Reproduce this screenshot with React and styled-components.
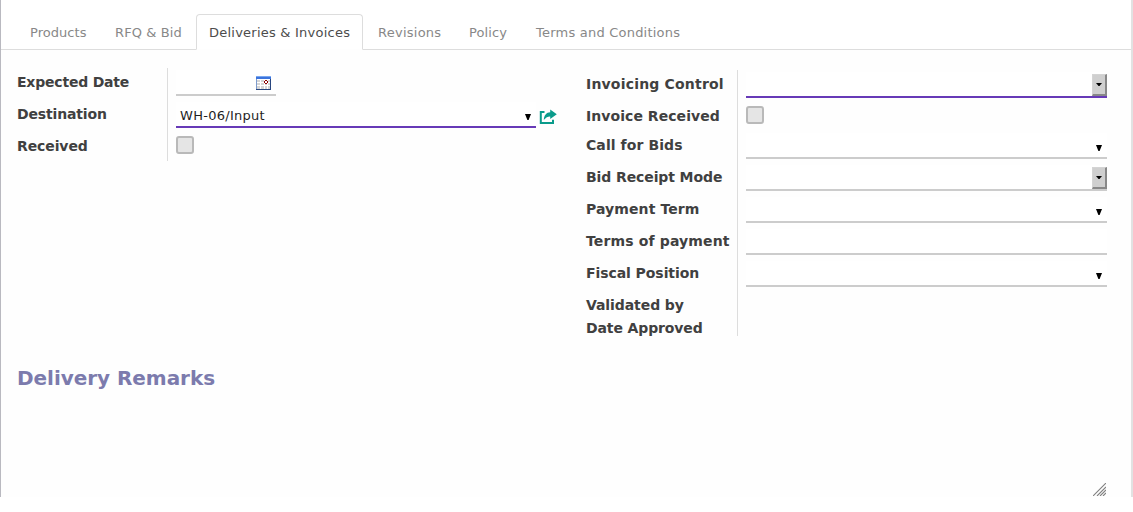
import React from 'react';
import styled, { createGlobalStyle } from 'styled-components';

const GlobalStyle = createGlobalStyle`
  * { box-sizing: border-box; }
  body {
    margin: 0;
    background: #fff;
    font-family: Verdana, "DejaVu Sans", sans-serif;
    font-size: 13px;
    color: #404040;
  }
`;

const Sheet = styled.main`
  display: flex;
  flex-direction: column;
  height: 497px;
  width: 1133px;
  background: #fefefe;
  border-left: 1px solid #b9b9c0;
  border-right: 2px solid #e2e2e2;
`;

const TabBar = styled.nav`
  display: flex;
  align-items: flex-end;
  height: 50px;
  padding-left: 16px;
  background: #fff;
  border-bottom: 1px solid #ddd;
`;

const Tab = styled.a`
  width: ${p => p.$width}px;
  height: 36px;
  margin-right: 2px;
  margin-bottom: -1px;
  padding: ${p => (p.$active ? '0 12px' : '0 13px')};
  line-height: ${p => (p.$active ? 35 : 37)}px;
  white-space: nowrap;
  letter-spacing: ${p => p.$spacing}px;
  color: ${p => (p.$active ? '#4c4c4c' : '#888')};
  ${p => p.$active && `
    background: #fff;
    border: 1px solid #ddd;
    border-bottom-color: #fefefe;
    border-radius: 4px 4px 0 0;
  `}
`;

const Columns = styled.div`
  display: flex;
  align-items: flex-start;
  padding: 18px 24px 0 16px;
  height: 316px;
`;

const Group = styled.section`
  width: ${p => p.$width}px;
  margin-top: ${p => p.$offset || 0}px;
  display: grid;
  grid-template-columns: ${p => p.$labels}px 1fr;
`;

const Labels = styled.div`
  padding-top: 2px;
  border-right: 1px solid #ddd;
`;

const Fields = styled.div`
  padding: 2px 0 0 8px;
`;

const Label = styled.div`
  height: ${p => p.$height}px;
  line-height: 24px;
  font-size: 14px;
  font-weight: bold;
  letter-spacing: ${p => p.$spacing}px;
  white-space: nowrap;
`;

const FieldRow = styled.div`
  display: flex;
  align-items: flex-start;
  height: ${p => p.$height}px;
`;

const Field = styled.div`
  display: flex;
  align-items: center;
  justify-content: space-between;
  width: ${p => p.$width}px;
  height: 26px;
  padding: 0 ${p => (p.$flush ? 0 : 5)}px 0 4px;
  background: #fff;
  border-bottom: 2px solid ${p => (p.$required ? '#673ab7' : '#ccc')};
`;

const Value = styled.span`
  padding-top: 3px;
  color: #1f1f1f;
  letter-spacing: ${p => p.$spacing || 0}px;
`;

const Checkbox = styled.span`
  width: 18px;
  height: 18px;
  margin-top: 2px;
  background: #e5e5e5;
  border: 2px solid #b9b9b9;
  border-radius: 3px;
`;

const Caret = styled.svg`
  width: 6px;
  height: 6px;
  margin-top: 5px;
`;

const SelectButton = styled.span`
  display: flex;
  align-items: center;
  justify-content: center;
  align-self: flex-end;
  width: 15px;
  height: 22px;
  background: #cfcfcf;
  border: solid;
  border-width: 1px 2px 2px 1px;
  border-color: #d4d4d4 #888 #888 #d4d4d4;
`;

const CalendarIcon = styled.svg`
  width: 15px;
  height: 14px;
  margin-top: 2px;
`;

const LinkIcon = styled.svg`
  width: 18px;
  height: 16px;
  margin: 7px 0 0 3px;
`;

const Heading = styled.h2`
  margin: 0;
  padding-left: 16px;
  font-size: 20px;
  line-height: 24px;
  letter-spacing: ${p => p.$spacing}px;
  color: #7c7bad;
`;

const Remarks = styled.div`
  display: flex;
  flex: 1;
  align-items: flex-end;
  justify-content: flex-end;
  padding: 0 25px 1px 16px;
`;

const Grip = styled.svg`
  width: 13px;
  height: 13px;
`;

const tabs = [
  ['Products', 83, 0.05],
  ['RFQ & Bid', 92, 0.1],
  ['Deliveries & Invoices', 167, 0.23],
  ['Revisions', 89, 0.25],
  ['Policy', 65, 0.1],
  ['Terms and Conditions', 170, 0.22],
];

const shipping = [
  { label: 'Expected Date', height: 32, spacing: -0.2, kind: 'date' },
  { label: 'Destination', height: 32, spacing: -0.15, kind: 'many2one', required: true, value: 'WH-06/Input' },
  { label: 'Received', height: 27, spacing: -0.1, kind: 'check' },
];

const invoicing = [
  { label: 'Invoicing Control', height: 32, spacing: 0.19, kind: 'select', required: true },
  { label: 'Invoice Received', height: 29, spacing: 0.06, kind: 'check' },
  { label: 'Call for Bids', height: 32, spacing: 0.08, kind: 'many2one' },
  { label: 'Bid Receipt Mode', height: 32, spacing: -0.1, kind: 'select' },
  { label: 'Payment Term', height: 32, spacing: 0.1, kind: 'many2one' },
  { label: 'Terms of payment', height: 32, spacing: 0.14, kind: 'text' },
  { label: 'Fiscal Position', height: 32, spacing: -0.07, kind: 'many2one' },
  { label: 'Validated by', height: 23, spacing: -0.08 },
  { label: 'Date Approved', height: 20, spacing: -0.12 },
];

function Calendar() {
  return (
    <CalendarIcon viewBox="0 0 15 14" shapeRendering="crispEdges">
      <path fill="#fff" d="M0 0h15v14H0z" />
      <path fill="#d5d5d5" d="M1 4h13v9H1z" />
      <path fill="#fff" d="M1 6h13v1H1zM1 9h13v1H1zM4 4h1v9H4zM8 4h1v9H8zM11 4h1v9h-1z" />
      <path fill="#3c74dc" d="M0 0h15v3H0z" />
      <path fill="#79a7f0" d="M0 0h15v1H0z" />
      <path fill="#7d9bcc" d="M0 3h1v11H0z" />
      <path fill="#28467f" d="M14 3h1v11H0v-1h14z" />
      <path fill="#fff" d="M8 4h4v4H8z" />
      <path fill="#8b0000" d="M9 4h2v1H9zM8 5h1v2H8zM11 5h1v2h-1zM9 7h2v1H9z" />
    </CalendarIcon>
  );
}

function External() {
  return (
    <LinkIcon viewBox="0 0 18 16">
      <path fill="none" stroke="#0a9b8b" strokeWidth="2" d="M5.5 3H1.8v11H14v-3.2" />
      <path fill="#0a9b8b" d="M11.2 0.5 17.8 5.2l-6.6 4.9V7.4C8.8 7.3 7 8.4 4.8 11 5 6.1 7.4 3.4 11.2 3.2z" />
    </LinkIcon>
  );
}

function Input({ kind, required, value, width }) {
  if (kind === 'check') return <Checkbox />;
  if (kind === 'date') return <Field $width={100}><Value /><Calendar /></Field>;
  if (kind === 'select') {
    return (
      <Field $width={width} $required={required} $flush>
        <Value />
        <SelectButton>
          <svg width="6" height="3"><path d="M0 0h6L3.5 3h-1z" /></svg>
        </SelectButton>
      </Field>
    );
  }
  if (kind === 'many2one') {
    return (
      <>
        <Field $width={width} $required={required}>
          <Value $spacing={0.28}>{value}</Value>
          <Caret viewBox="0 0 6 6"><path d="M0 0h6L3.6 6H2.4z" /></Caret>
        </Field>
        {value && <External />}
      </>
    );
  }
  if (kind === 'text') return <Field $width={width} />;
  return null;
}

function FormGroup({ rows, width, labels, offset, fieldWidth }) {
  return (
    <Group $width={width} $labels={labels} $offset={offset}>
      <Labels>
        {rows.map(r => <Label key={r.label} $height={r.height} $spacing={r.spacing}>{r.label}</Label>)}
      </Labels>
      <Fields>
        {rows.map(r => (
          <FieldRow key={r.label} $height={r.height}><Input {...r} width={fieldWidth} /></FieldRow>
        ))}
      </Fields>
    </Group>
  );
}

export default function App() {
  return (
    <>
      <GlobalStyle />
      <Sheet>
        <TabBar>
          {tabs.map(([name, width, spacing]) => (
            <Tab key={name} $width={width} $spacing={spacing} $active={name === 'Deliveries & Invoices'}>{name}</Tab>
          ))}
        </TabBar>
        <Columns>
          <FormGroup rows={shipping} width={569} labels={151} fieldWidth={360} />
          <FormGroup rows={invoicing} width={521} labels={152} offset={2} fieldWidth={361} />
        </Columns>
        <Heading $spacing={-0.04}>Delivery Remarks</Heading>
        <Remarks>
          <Grip viewBox="0 0 13 13" stroke="#808080" strokeWidth="1.1">
            <path d="M0 13 13 0M4 13l9-9M7 13l6-6M10 13l3-3" />
          </Grip>
        </Remarks>
      </Sheet>
    </>
  );
}
